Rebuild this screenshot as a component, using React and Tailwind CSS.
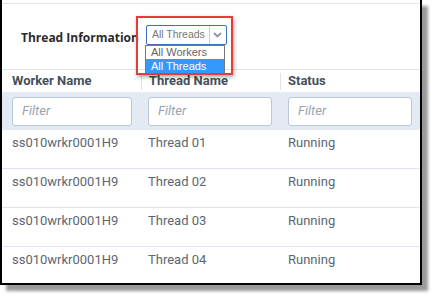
import React from 'react';

const rows = ['01', '02', '03', '04'];

const FilterInput = ({ w }) => (
  <div className={`h-[29px] ${w} rounded-[3px] border border-[#b9c8da] bg-white flex items-center pl-[9px]`}>
    <span className="text-[13px] italic text-[#9aa3ad]">Filter</span>
  </div>
);

const App = () => {
  return (
    <div className="w-[436px] h-[299px] bg-white font-['Roboto',sans-serif]">
      <div className="w-[422px] h-[285px] bg-white border-l-2 border-r-2 border-b-2 border-black shadow-[6px_6px_3px_rgba(0,0,0,0.4)] flex flex-col">
        <div className="mt-[3px] h-px bg-[#dfe5ec]" />

        {/* title + thread selector */}
        <div className="h-[65px] flex items-center pl-[19px] pt-[3px]">
          <span className="text-[12px] font-bold text-[#2b2b2b] font-['Open_Sans',sans-serif]">
            Thread Information
          </span>
          <div className="relative ml-[7px] -mt-[6px]">
            <div className="w-[81px] h-[20px] border border-[#3f6fb5] rounded-[2px] bg-white flex items-center font-['Liberation_Sans',sans-serif]">
              <span className="flex-1 pl-[5px] text-[10.5px] text-[#777]">All Threads</span>
              <div className="w-[17px] h-full border-l border-[#c9ced5] flex items-center justify-center">
                <svg width="9" height="6" viewBox="0 0 9 6">
                  <path d="M1 1l3.5 3.5L8 1" fill="none" stroke="#8a96a3" strokeWidth="1.8" />
                </svg>
              </div>
            </div>
            <div className="absolute left-[-1px] top-[20px] w-[80px] border border-[#7a7a7a] bg-white text-[11px] font-['Liberation_Sans',sans-serif] z-10">
              <div className="h-[13px] leading-[13px] pl-[5px] text-[#666]">All Workers</div>
              <div className="h-[14px] leading-[14px] pl-[5px] bg-[#3399ff] text-white">All Threads</div>
            </div>
            <div className="absolute left-[-10px] top-[-9px] w-[97px] h-[59px] border-2 border-[#e53b3b] shadow-[1px_2px_4px_rgba(0,0,0,0.35)] z-20 pointer-events-none" />
          </div>
        </div>

        {/* header */}
        <div className="border-t border-[#dde4ec] h-[23px] flex items-center text-[13px] font-bold text-[#46505b]">
          <div className="w-[139px] pl-[10px]">Worker Name</div>
          <div className="w-[139px] pl-[7px] border-l border-[#dde4ec] h-[17px] flex items-center">Thread Name</div>
          <div className="flex-1 pl-[7px] border-l border-[#dde4ec] h-[17px] flex items-center">Status</div>
        </div>

        {/* filters */}
        <div className="h-[38px] bg-[#e3eaf3] flex items-center">
          <div className="w-[139px] pl-[10px]"><FilterInput w="w-[120px]" /></div>
          <div className="w-[139px] pl-[7px]"><FilterInput w="w-[124px]" /></div>
          <div className="flex-1 pl-[8px]"><FilterInput w="w-[124px]" /></div>
        </div>

        {/* rows */}
        {rows.map((n, i) => (
          <div
            key={n}
            className={`${i < 3 ? 'h-[39px] border-b border-[#dde6f0]' : 'flex-1'} flex pt-[3px] text-[13px] text-[#5d6670]`}
          >
            <div className="w-[139px] pl-[10px]">ss010wrkr0001H9</div>
            <div className="w-[139px] pl-[7px]">Thread {n}</div>
            <div className="flex-1 pl-[8px]">Running</div>
          </div>
        ))}
      </div>
    </div>
  );
};

export default App;
